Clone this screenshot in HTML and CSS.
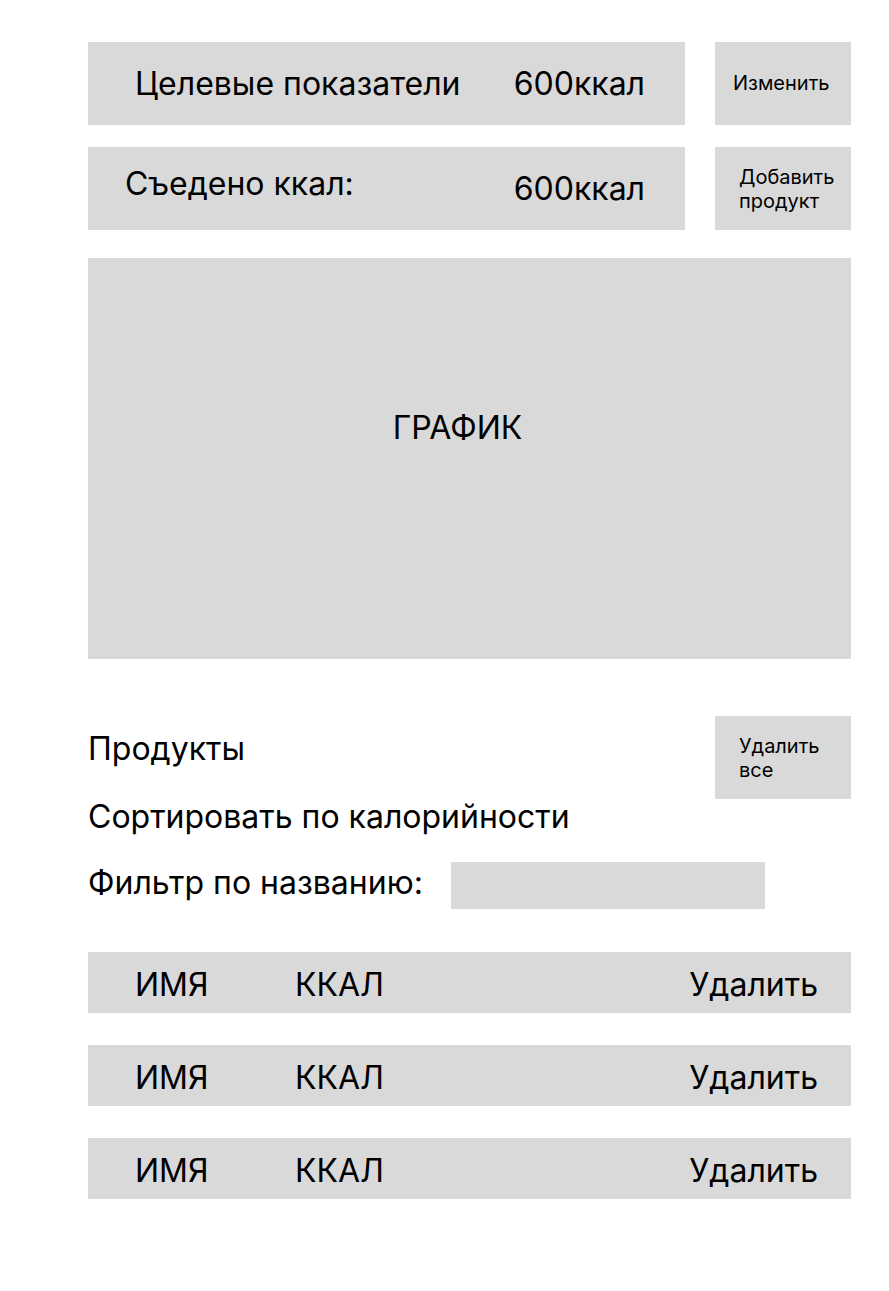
FILE: index.html
```html
<!DOCTYPE html>
<html lang="ru">
<head>
<meta charset="utf-8">
<title>Калории</title>
<link rel="stylesheet" href="styles.css">
</head>
<body>
<main class="page">
  <section class="summary">
    <div class="summary-row">
      <div class="stat stat-target">
        <span class="stat-label">Целевые показатели</span>
        <span class="stat-value">600ккал</span>
      </div>
      <button class="side-btn btn-edit">Изменить</button>
    </div>
    <div class="summary-row">
      <div class="stat stat-eaten">
        <span class="stat-label">Съедено ккал:</span>
        <span class="stat-value">600ккал</span>
      </div>
      <button class="side-btn btn-multi">Добавить<br>продукт</button>
    </div>
  </section>

  <section class="chart">ГРАФИК</section>

  <section class="products">
    <div class="products-head">
      <h2 class="products-title">Продукты</h2>
      <button class="side-btn btn-multi btn-clear">Удалить<br>все</button>
    </div>
    <div class="sort-line">Сортировать по калорийности</div>
    <div class="filter-line">
      <span class="filter-label">Фильтр по названию:</span>
      <div class="filter-input"></div>
    </div>
  </section>

  <section class="list">
    <div class="item"><span class="item-name">ИМЯ</span><span class="item-kcal">ККАЛ</span><span class="item-del">Удалить</span></div>
    <div class="item"><span class="item-name">ИМЯ</span><span class="item-kcal">ККАЛ</span><span class="item-del">Удалить</span></div>
    <div class="item"><span class="item-name">ИМЯ</span><span class="item-kcal">ККАЛ</span><span class="item-del">Удалить</span></div>
  </section>
</main>
</body>
</html>
```

FILE: styles.css
```css
* { box-sizing: border-box; }

html, body {
  margin: 0;
  padding: 0;
  background: #ffffff;
}

body {
  font-family: Inter, "Noto Sans", sans-serif;
  color: #000000;
  font-size: 32px;
  line-height: 38px;
}

.page {
  width: 763px;
  margin-left: 88px;
  padding-top: 42px;
  padding-bottom: 80px;
}

.summary {
  display: flex;
  flex-direction: column;
  gap: 22px;
}

.summary-row {
  display: flex;
  gap: 30px;
  height: 83px;
}

.stat {
  flex: 1;
  display: flex;
  align-items: center;
  background: #d9d9d9;
  padding-right: 40px;
}

.stat-target { padding-left: 47px; }
.stat-eaten { padding-left: 37px; }
.stat-eaten .stat-label { margin-bottom: 9px; }

.stat-value { margin-left: auto; }

.side-btn {
  width: 136px;
  flex: none;
  border: 0;
  margin: 0;
  background: #d9d9d9;
  font-family: inherit;
  font-size: 20px;
  line-height: 24px;
  color: #000;
  text-align: left;
  padding: 0 0 2px 18px;
}

.btn-multi { padding-left: 24px; padding-bottom: 0; }

.chart {
  margin-top: 28px;
  height: 401px;
  background: #d9d9d9;
  display: flex;
  align-items: center;
  justify-content: center;
  padding-right: 24px;
  padding-bottom: 62px;
}

.products { margin-top: 57px; }

.products-head {
  display: flex;
  justify-content: space-between;
  align-items: flex-start;
}

.products-title {
  margin: 14px 0 0;
  font: inherit;
}

.btn-clear { height: 83px; }

.sort-line { height: 36px; display: flex; align-items: center; }

.filter-line {
  margin-top: 27px;
  display: flex;
  align-items: center;
  gap: 28px;
}

.filter-label { margin-top: -5px; }

.filter-input {
  width: 314px;
  height: 47px;
  background: #d9d9d9;
}

.list {
  margin-top: 43px;
  display: flex;
  flex-direction: column;
  gap: 32px;
}

.item {
  height: 61px;
  background: #d9d9d9;
  display: flex;
  align-items: center;
  padding: 4px 33px 0 47px;
}

.item-name { width: 160px; }
.item-del { margin-left: auto; }
```
